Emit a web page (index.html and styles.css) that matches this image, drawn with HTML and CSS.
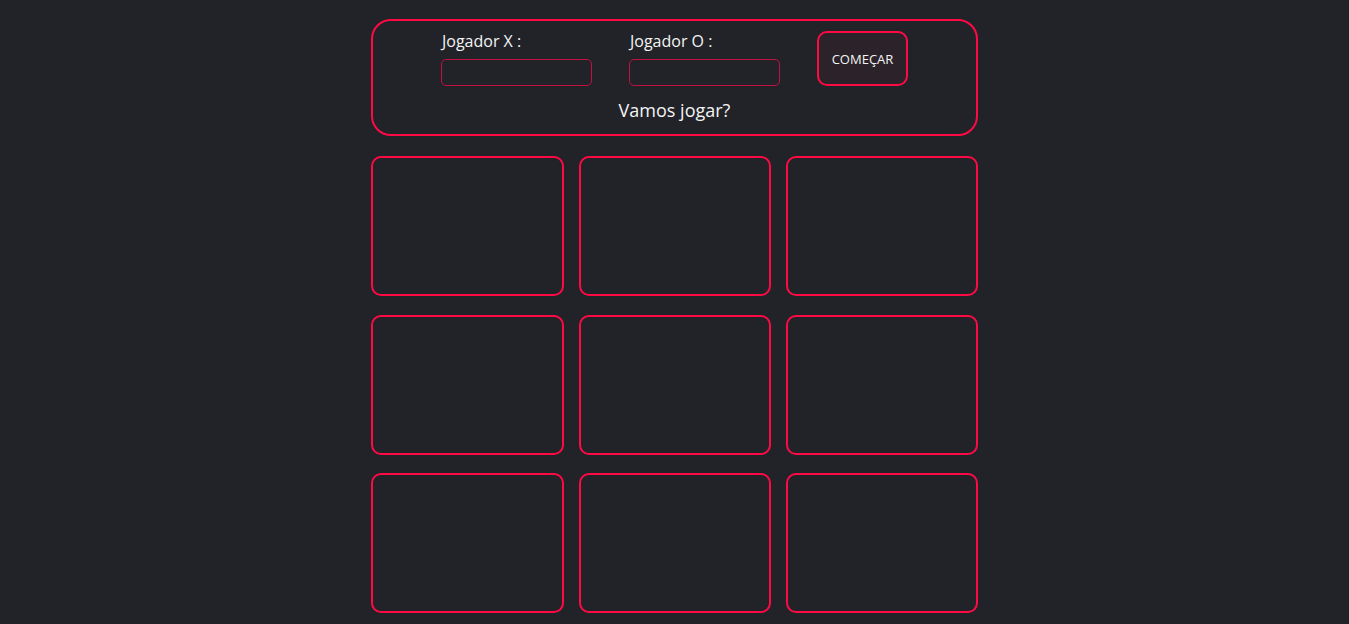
FILE: index.html
```html
<!DOCTYPE html>
<html lang="pt-BR">
<head>
<meta charset="utf-8">
<title>Jogo da Velha</title>
<link rel="stylesheet" href="styles.css">
</head>
<body>
<main class="app">
  <section class="panel">
    <div class="controls">
      <div class="field">
        <label class="field-label" for="px">Jogador X :</label>
        <input class="field-input" id="px" type="text">
      </div>
      <div class="field">
        <label class="field-label" for="po">Jogador O :</label>
        <input class="field-input" id="po" type="text">
      </div>
      <button class="start-btn" type="button">COMEÇAR</button>
    </div>
    <p class="status">Vamos jogar?</p>
  </section>
  <section class="board">
    <div class="cell"></div>
    <div class="cell"></div>
    <div class="cell"></div>
    <div class="cell"></div>
    <div class="cell"></div>
    <div class="cell"></div>
    <div class="cell"></div>
    <div class="cell"></div>
    <div class="cell"></div>
  </section>
</main>
</body>
</html>
```

FILE: styles.css
```css
* { box-sizing: border-box; }
html, body {
  margin: 0;
  padding: 0;
  background: #212328;
  color: #f4f4f4;
  font-family: "Open Sans", "Noto Sans", sans-serif;
}
.app {
  width: 607px;
  margin: 19px auto 0;
  display: flex;
  flex-direction: column;
  gap: 20px;
}
.panel {
  border: 2px solid #ff0a45;
  border-radius: 20px;
  height: 117px;
  padding: 10px 0 0;
  display: flex;
  flex-direction: column;
  align-items: center;
}
.controls {
  display: flex;
  align-items: flex-start;
  gap: 37px;
}
.field {
  display: flex;
  flex-direction: column;
  gap: 8px;
  width: 151px;
}
.field-label {
  font-size: 16px;
  font-weight: 500;
  line-height: 20px;
  padding-left: 1px;
}
.field-input {
  width: 151px;
  height: 27px;
  border: 1px solid #c21040;
  border-radius: 5px;
  background: #212328;
  color: #f4f4f4;
  outline: none;
}
.start-btn {
  width: 91px;
  height: 55px;
  border: 2px solid #ff0a45;
  border-radius: 10px;
  background: #2b2329;
  color: #f4f4f4;
  font-family: inherit;
  font-size: 13px;
  font-weight: 500;
  padding: 0;
}
.status {
  margin: 12px 0 0;
  font-size: 18px;
  line-height: 24px;
  font-weight: 500;
}
.board {
  display: grid;
  grid-template-columns: 193px 192px 192px;
  grid-auto-rows: 140px;
  column-gap: 15px;
  row-gap: 18.5px;
}
.cell {
  border: 2px solid #ff0a45;
  border-radius: 10px;
}
```
